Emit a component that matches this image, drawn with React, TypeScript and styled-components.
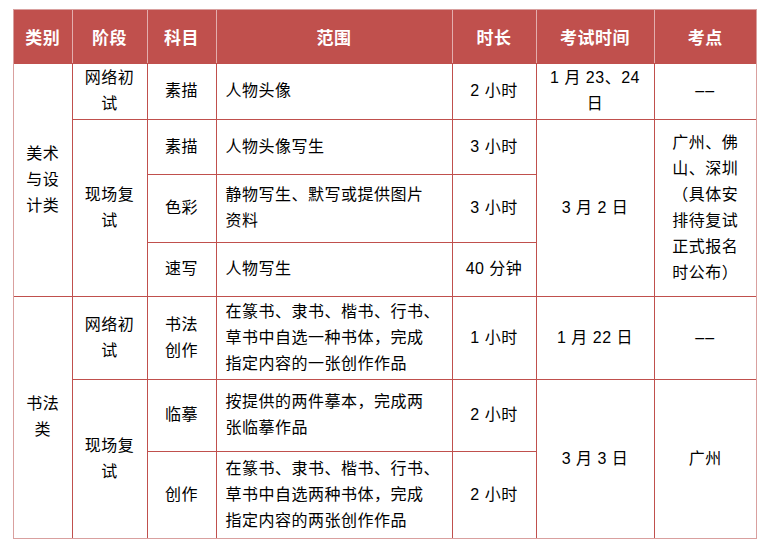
import React from "react";
import styled, { createGlobalStyle } from "styled-components";

const GlobalStyle = createGlobalStyle`
    html, body {
        margin: 0;
        padding: 0;
        background: #ffffff;
    }
    body {
        font-family: "Liberation Sans", "Noto Sans CJK SC", sans-serif;
        color: #000000;
    }
`;

const Frame = styled.div`
    margin: 9px 0 0 13px;
    width: 742px;
    border: 1px solid #d9a09f;
`;

const Table = styled.table`
    width: 742px;
    border-collapse: collapse;
    border-style: hidden;
    table-layout: fixed;
`;

const HeadCell = styled.th`
    background-color: #c0504d;
    color: #ffffff;
    font-size: 17px;
    font-weight: 700;
    letter-spacing: 0.5px;
    text-align: center;
    vertical-align: middle;
    border-left: 1px solid #e3aead;
    border-right: 1px solid #e3aead;
    border-bottom: 1px solid #c0504d;
    padding: 0;
`;

const Row = styled.tr<{ $h: number }>`
    height: ${p => p.$h}px;
`;

const Cell = styled.td<{ $left?: boolean }>`
    border: 1px solid #c0504d;
    font-size: 16px;
    letter-spacing: 0.5px;
    line-height: 26px;
    vertical-align: middle;
    text-align: ${p => (p.$left ? "left" : "center")};
    padding: ${p => (p.$left ? "0 6px 0 9px" : "0 4px")};
    white-space: nowrap;
`;

const Dash = styled.span`
    letter-spacing: 1px;
`;

const widths = [58, 75, 69, 236, 84, 118, 102];

const Lines: React.FC<{ text: string[] }> = ({ text }) => (
    <>
        {text.map((t, i) => (
            <React.Fragment key={i}>
                {i > 0 && <br />}
                {t}
            </React.Fragment>
        ))}
    </>
);

export default function App() {
    return (
        <>
            <GlobalStyle />
            <Frame>
                <Table>
                    <colgroup>
                        {widths.map((w, i) => (
                            <col key={i} style={{ width: w }} />
                        ))}
                    </colgroup>
                    <thead>
                        <Row $h={53}>
                            <HeadCell>类别</HeadCell>
                            <HeadCell>阶段</HeadCell>
                            <HeadCell>科目</HeadCell>
                            <HeadCell>范围</HeadCell>
                            <HeadCell>时长</HeadCell>
                            <HeadCell>考试时间</HeadCell>
                            <HeadCell>考点</HeadCell>
                        </Row>
                    </thead>
                    <tbody>
                        <Row $h={56}>
                            <Cell rowSpan={4}><Lines text={["美术", "与设", "计类"]} /></Cell>
                            <Cell><Lines text={["网络初", "试"]} /></Cell>
                            <Cell>素描</Cell>
                            <Cell $left>人物头像</Cell>
                            <Cell>2 小时</Cell>
                            <Cell><Lines text={["1 月 23、24", "日"]} /></Cell>
                            <Cell><Dash>––</Dash></Cell>
                        </Row>
                        <Row $h={55}>
                            <Cell rowSpan={3}><Lines text={["现场复", "试"]} /></Cell>
                            <Cell>素描</Cell>
                            <Cell $left>人物头像写生</Cell>
                            <Cell>3 小时</Cell>
                            <Cell rowSpan={3}>3 月 2 日</Cell>
                            <Cell rowSpan={3}>
                                <Lines text={["广州、佛", "山、深圳", "（具体安", "排待复试", "正式报名", "时公布）"]} />
                            </Cell>
                        </Row>
                        <Row $h={68}>
                            <Cell>色彩</Cell>
                            <Cell $left><Lines text={["静物写生、默写或提供图片", "资料"]} /></Cell>
                            <Cell>3 小时</Cell>
                        </Row>
                        <Row $h={54}>
                            <Cell>速写</Cell>
                            <Cell $left>人物写生</Cell>
                            <Cell>40 分钟</Cell>
                        </Row>
                        <Row $h={83}>
                            <Cell rowSpan={3}><Lines text={["书法", "类"]} /></Cell>
                            <Cell><Lines text={["网络初", "试"]} /></Cell>
                            <Cell><Lines text={["书法", "创作"]} /></Cell>
                            <Cell $left>
                                <Lines text={["在篆书、隶书、楷书、行书、", "草书中自选一种书体，完成", "指定内容的一张创作作品"]} />
                            </Cell>
                            <Cell>1 小时</Cell>
                            <Cell>1 月 22 日</Cell>
                            <Cell><Dash>––</Dash></Cell>
                        </Row>
                        <Row $h={72}>
                            <Cell rowSpan={2}><Lines text={["现场复", "试"]} /></Cell>
                            <Cell>临摹</Cell>
                            <Cell $left><Lines text={["按提供的两件摹本，完成两", "张临摹作品"]} /></Cell>
                            <Cell>2 小时</Cell>
                            <Cell rowSpan={2}>3 月 3 日</Cell>
                            <Cell rowSpan={2}>广州</Cell>
                        </Row>
                        <Row $h={87}>
                            <Cell>创作</Cell>
                            <Cell $left>
                                <Lines text={["在篆书、隶书、楷书、行书、", "草书中自选两种书体，完成", "指定内容的两张创作作品"]} />
                            </Cell>
                            <Cell>2 小时</Cell>
                        </Row>
                    </tbody>
                </Table>
            </Frame>
        </>
    );
}
